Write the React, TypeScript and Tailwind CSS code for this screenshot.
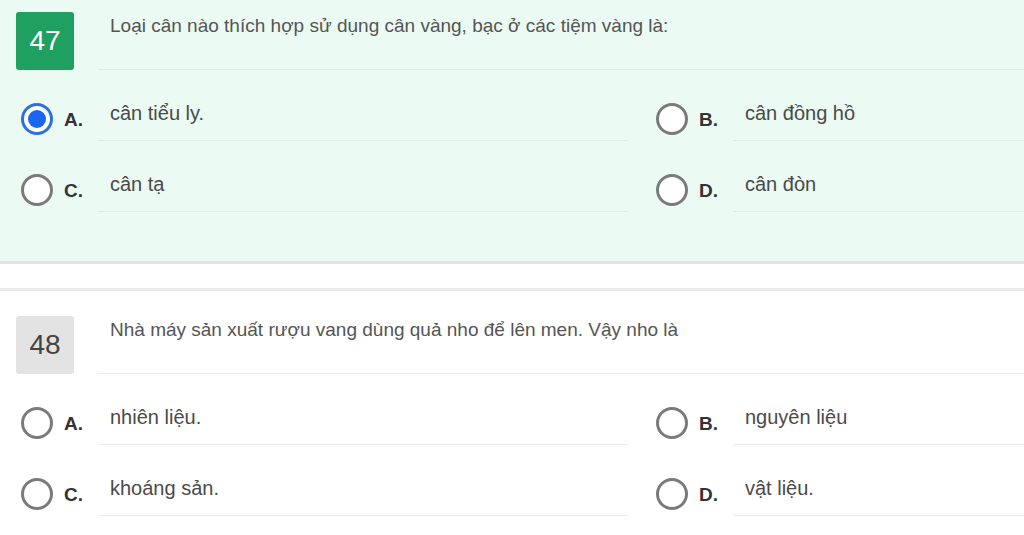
import React from "react";

type Opt = { letter: string; text: string; selected?: boolean };

function Radio({ selected }: { selected?: boolean }) {
  if (selected) {
    return (
      <div className="w-[32px] h-[32px] rounded-full border-[3px] border-[#2b6fe0] bg-white flex items-center justify-center shrink-0">
        <div className="w-[18px] h-[18px] rounded-full bg-[#1a66ec]" />
      </div>
    );
  }
  return <div className="w-[32px] h-[32px] rounded-full border-[3px] border-[#7a7a7a] bg-white shrink-0" />;
}

function Option({ o, left, lineColor }: { o: Opt; left: boolean; lineColor: string }) {
  return (
    <div className={`flex h-[71px] ${left ? "pr-[7px]" : ""}`}>
      <div className="w-[98px] shrink-0 flex items-start pt-[33px] pl-[21px]">
        <Radio selected={o.selected} />
        <span className="ml-[11px] mt-[6px] text-[19px] leading-[22px] font-bold text-[#333]">{o.letter}.</span>
      </div>
      <div className={`flex-1 border-b ${lineColor} pl-[12px] pt-[30px]`}>
        <span className="text-[20px] leading-[26px] text-[#4a4a4a]">{o.text}</span>
      </div>
    </div>
  );
}

function Question({
  num,
  text,
  opts,
  active,
  lineColor,
}: {
  num: number;
  text: string;
  opts: Opt[];
  active: boolean;
  lineColor: string;
}) {
  return (
    <div>
      <div className="flex">
        <div className="w-[98px] shrink-0 pl-[16px]">
          <div
            className={`w-[58px] h-[58px] rounded-[3px] flex items-center justify-center text-[28px] ${
              active ? "bg-[#1f9f60] text-white" : "bg-[#e3e3e3] text-[#444]"
            }`}
          >
            {num}
          </div>
        </div>
        <div className={`flex-1 h-[58px] border-b ${lineColor} pl-[12px] pt-[2px]`}>
          <span className="text-[19px] leading-[24px] text-[#555]">{text}</span>
        </div>
      </div>
      <div className="grid grid-cols-[635px_1fr]">
        <Option o={opts[0]} left lineColor={lineColor} />
        <Option o={opts[1]} left={false} lineColor={lineColor} />
        <Option o={opts[2]} left lineColor={lineColor} />
        <Option o={opts[3]} left={false} lineColor={lineColor} />
      </div>
    </div>
  );
}

export default function App() {
  return (
    <div
      className="w-[1024px] h-[535px] overflow-hidden bg-white"
      style={{ fontFamily: '"Liberation Sans", Arial, sans-serif' }}
    >
      <div className="bg-[#ebfaf3] pt-[12px] h-[264px] border-b-[3px] border-[#dfe5e2]">
        <Question
          num={47}
          active
          lineColor="border-[#e1ebe6]"
          text="Loại cân nào thích hợp sử dụng cân vàng, bạc ở các tiệm vàng là:"
          opts={[
            { letter: "A", text: "cân tiểu ly.", selected: true },
            { letter: "B", text: "cân đồng hồ" },
            { letter: "C", text: "cân tạ" },
            { letter: "D", text: "cân đòn" },
          ]}
        />
      </div>
      <div className="h-[24px]" />
      <div className="border-t-[3px] border-[#ebebeb] pt-[25px]">
        <Question
          num={48}
          active={false}
          lineColor="border-[#ececec]"
          text="Nhà máy sản xuất rượu vang dùng quả nho để lên men. Vậy nho là"
          opts={[
            { letter: "A", text: "nhiên liệu." },
            { letter: "B", text: "nguyên liệu" },
            { letter: "C", text: "khoáng sản." },
            { letter: "D", text: "vật liệu." },
          ]}
        />
      </div>
    </div>
  );
}
